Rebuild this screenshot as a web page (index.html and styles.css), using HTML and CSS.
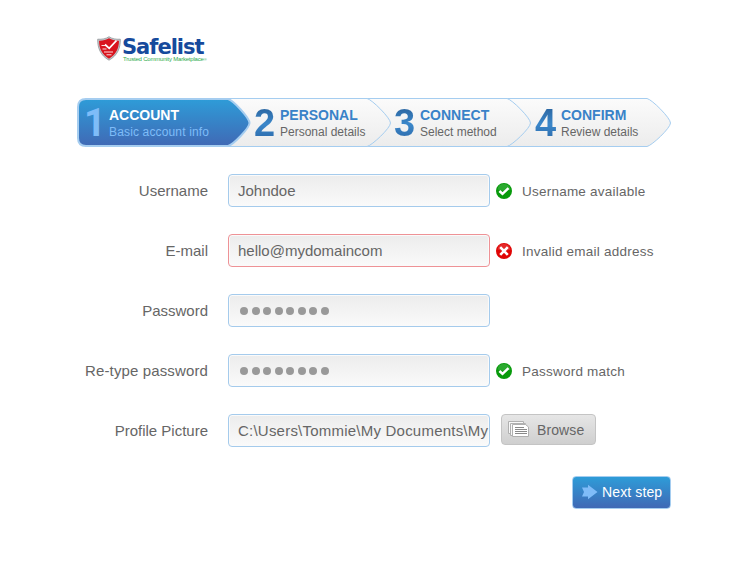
FILE: index.html
```
<!DOCTYPE html>
<html lang="en">
<head>
    <meta charset="UTF-8">
    <meta name="viewport" content="width=device-width, initial-scale=1.0">
    <title>Safelist - Create account</title>
    <link rel="stylesheet" href="styles.css">
</head>
<body>

    <div class="page">
        <div class="logo">
            <svg class="shield" width="24" height="25" viewBox="0 0 24 25">
                <path d="M12 .7C9 2.800 5 3.500 .7 3.200 .5 12 3.500 19.500 12 24.200 20.500 19.500 23.500 12 23.300 3.200 19 3.500 15 2.800 12 .7Z" fill="#c3c6ca" stroke="#85898e" stroke-width=".7"/>
                <path d="M12 2.300C9 4.200 5.800 4.800 2 4.700 2.100 12.500 5 18.500 12 22.700 19 18.500 21.900 12.500 22 4.700 18.200 4.800 15 4.200 12 2.300Z" fill="#d9141e"/>
                <path d="M4.500 9.500h4M5.500 13h4M7 16h9M9.500 18.800h5" stroke="#fbdcdc" stroke-width="1"/>
                <path d="M8 8.500l4.200 3.800L19.500 4.500" fill="none" stroke="#fff" stroke-width="1.800"/>
            </svg>
            <div class="logo-text">
                <div class="logo-name">Safelist</div>
                <div class="logo-tag">Trusted Community Marketplace<span class="reg">&reg;</span></div>
            </div>
        </div>

        <div class="steps">
            <svg class="steps-bg" width="594" height="50" viewBox="0 0 594 50">
                <defs>
                    <linearGradient id="gray" x1="0" y1="0" x2="0" y2="1">
                        <stop offset="0" stop-color="#fbfbfb"/>
                        <stop offset="1" stop-color="#ececec"/>
                    </linearGradient>
                    <linearGradient id="blue" x1="0" y1="0" x2="0" y2="1">
                        <stop offset="0" stop-color="#2e9cd8"/>
                        <stop offset="1" stop-color="#4069b5"/>
                    </linearGradient>
                </defs>
                <g fill="url(#gray)" stroke="#a5cdf0">
                    <path d="M9 .5H570C575 1.500 593.500 20 593.500 25S575 47.500 570 48.500H9Z"/>
                    <path d="M9 .5H430C435 1.500 453.500 20 453.500 25S435 47.500 430 48.500H9Z"/>
                    <path d="M9 .5H290C295 1.500 313.500 20 313.500 25S295 47.500 290 48.500H9Z"/>
                </g>
                <path d="M9 1H151C156 2 172.500 20 172.500 25S156 47 151 48H9Q1 48 1 40V9Q1 1 9 1Z" fill="url(#blue)" stroke="#a5cdf0" stroke-width="2"/>
            </svg>
            <div class="step active">
                <span class="num">1</span>
                <div>
                    <div class="step-title">ACCOUNT</div>
                    <div class="step-info">Basic account info</div>
                </div>
            </div>
            <div class="step">
                <span class="num">2</span>
                <div>
                    <div class="step-title">PERSONAL</div>
                    <div class="step-info">Personal details</div>
                </div>
            </div>
            <div class="step">
                <span class="num">3</span>
                <div>
                    <div class="step-title">CONNECT</div>
                    <div class="step-info">Select method</div>
                </div>
            </div>
            <div class="step">
                <span class="num">4</span>
                <div>
                    <div class="step-title">CONFIRM</div>
                    <div class="step-info">Review details</div>
                </div>
            </div>
        </div>

        <div class="form">
            <div class="row">
                <label class="label">Username</label>
                <div class="field">Johndoe</div>
                <svg class="status" width="16" height="16" viewBox="0 0 16 16">
                    <circle cx="8" cy="8" r="8" fill="#079a0b"/>
                    <path d="M1.500 6.500a6.600 6.600 0 0 1 13 0Q8 9 1.500 6.500Z" fill="#fff" opacity=".15"/>
                    <path d="M3.400 8l3.100 2.800 6-5.600" fill="none" stroke="#fff" stroke-width="2.500"/>
                </svg>
                <span class="msg">Username available</span>
            </div>
            <div class="row">
                <label class="label">E-mail</label>
                <div class="field error">hello@mydomaincom</div>
                <svg class="status" width="16" height="16" viewBox="0 0 16 16">
                    <circle cx="8" cy="8" r="8" fill="#e00505"/>
                    <path d="M1.500 6.500a6.600 6.600 0 0 1 13 0Q8 9 1.500 6.500Z" fill="#fff" opacity=".15"/>
                    <path d="M4.200 4.200l7.600 7.600M11.800 4.200l-7.600 7.600" stroke="#fff" stroke-width="2.600"/>
                </svg>
                <span class="msg">Invalid email address</span>
            </div>
            <div class="row">
                <label class="label">Password</label>
                <div class="field dots"><i></i><i></i><i></i><i></i><i></i><i></i><i></i><i></i></div>
            </div>
            <div class="row">
                <label class="label wide">Re-type password</label>
                <div class="field dots"><i></i><i></i><i></i><i></i><i></i><i></i><i></i><i></i></div>
                <svg class="status" width="16" height="16" viewBox="0 0 16 16">
                    <circle cx="8" cy="8" r="8" fill="#079a0b"/>
                    <path d="M1.500 6.500a6.600 6.600 0 0 1 13 0Q8 9 1.500 6.500Z" fill="#fff" opacity=".15"/>
                    <path d="M3.400 8l3.100 2.800 6-5.600" fill="none" stroke="#fff" stroke-width="2.500"/>
                </svg>
                <span class="msg">Password match</span>
            </div>
            <div class="row">
                <label class="label">Profile Picture</label>
                <div class="field path">C:\Users\Tommie\My Documents\My</div>
                <button class="browse">
                    <svg width="22" height="17" viewBox="0 0 22 17">
                        <g fill="#f8f8f8" stroke="#b0b0b0">
                            <path d="M.5 .5h15v12H.5Z"/>
                            <path d="M2.500 2.500h15v12h-15Z"/>
                            <path d="M4.500 3.500h13l3 2.500v9.500h-16Z" fill="#fff"/>
                        </g>
                        <path d="M7 6.500h9M7 8.500h12M7 10.500h12M7 12.500h12" stroke="#8a8a8a"/>
                    </svg>
                    Browse
                </button>
            </div>
        </div>

        <div class="actions">
            <button class="next">
                <svg width="16" height="16" viewBox="0 0 16 16">
                    <path d="M0 3.500h6V.8L15.500 8 6 15.200v-2.700H0L2 8Z" fill="#7fbcf8"/>
                </svg>
                Next step
            </button>
        </div>
    </div>

</body>
</html>
```

FILE: styles.css
```
* {
    margin: 0;
    padding: 0;
    box-sizing: border-box;
}

body {
    font-family: "Liberation Sans", Arial, sans-serif;
    background-color: #fff;
    color: #666;
}

.page {
    width: 594px;
    margin-left: 77px;
    padding-top: 36px;
}

.logo {
    display: flex;
    height: 62px;
    padding-left: 20px;
}

.logo-text {
    padding-left: 1px;
}

.logo-name {
    font-family: "DejaVu Sans", sans-serif;
    font-size: 21px;
    font-weight: bold;
    letter-spacing: -1px;
    line-height: 20px;
    margin-top: 1px;
    color: #164a9c;
}

.logo-tag {
    font-size: 6px;
    letter-spacing: -0.2px;
    line-height: 7px;
    margin-left: 1px;
    margin-top: -1px;
    white-space: nowrap;
    color: #2dab4d;
}

.logo-tag .reg {
    font-size: 4px;
}

/* wizard steps */
.steps {
    position: relative;
    display: grid;
    grid-template-columns: 168px 140px 141px 145px;
    height: 50px;
}

.steps-bg {
    position: absolute;
    top: 0;
    left: 0;
}

.step {
    position: relative;
    display: flex;
    padding: 9px 0 0 9px;
}

.num {
    width: 26px;
    font-size: 38px;
    line-height: 32px;
    height: 34px;
    font-weight: bold;
    background: linear-gradient(#2b659f, #3b87ca 50%, #2b68a8);
    -webkit-background-clip: text;
    background-clip: text;
    color: transparent;
}

.step-title {
    font-size: 14px;
    line-height: 16px;
    font-weight: bold;
    color: #3982c8;
}

.step-info {
    font-size: 12px;
    line-height: 18px;
    white-space: nowrap;
    color: #666;
}

/* Roboto has the 1 without a foot */
.active .num {
    width: 25px;
    margin-left: -2px;
    font-family: Roboto, sans-serif;
    background: none;
    color: #7fbcf8;
}

.active .step-title {
    color: #fff;
}

.active .step-info {
    letter-spacing: 0.15px;
    color: #7fbcf8;
}

/* form */
.form {
    display: flex;
    flex-direction: column;
    gap: 27px;
    padding-top: 26px;
}

.row {
    display: flex;
    align-items: center;
    height: 33px;
}

.label {
    width: 131px;
    margin-right: 20px;
    font-size: 15px;
    text-align: right;
}

.label.wide {
    letter-spacing: 0.13px;
}

.field {
    width: 262px;
    height: 33px;
    padding-left: 9px;
    border: 1px solid #a5cbec;
    border-radius: 4px;
    background: linear-gradient(#ececec, #fafafa);
    box-shadow: inset 0 0 0 1px #fafafa;
    font-size: 15px;
    line-height: 31px;
    white-space: nowrap;
    overflow: hidden;
}

.field.error {
    border-color: #ee9296;
}

.field.path {
    letter-spacing: 0.22px;
}

.dots {
    display: flex;
    align-items: center;
    gap: 3.500px;
    padding-left: 11px;
}

.dots i {
    width: 8px;
    height: 8px;
    border-radius: 50%;
    background: #999;
}

.status {
    margin: 0 10px 0 6px;
}

.msg {
    padding-top: 1px;
    font-size: 13.500px;
    letter-spacing: 0.23px;
}

button {
    display: flex;
    align-items: center;
    font-family: inherit;
    border-radius: 4px;
}

.browse {
    width: 95px;
    height: 31px;
    margin: 0 0 2px 11px;
    padding-left: 6px;
    gap: 7px;
    font-size: 14px;
    letter-spacing: 0.1px;
    color: #666;
    border: 1px solid #c4c4c4;
    background: linear-gradient(#e6e6e6, #cfcfcf);
}

.actions {
    display: flex;
    justify-content: flex-end;
    padding-top: 29px;
}

.next {
    width: 99px;
    height: 33px;
    padding: 0 0 2px 9px;
    gap: 4px;
    font-size: 14px;
    letter-spacing: 0.12px;
    white-space: nowrap;
    color: #fff;
    border: 1px solid #a5cdf0;
    background: linear-gradient(#2e9cd8, #4069b5);
}
```
